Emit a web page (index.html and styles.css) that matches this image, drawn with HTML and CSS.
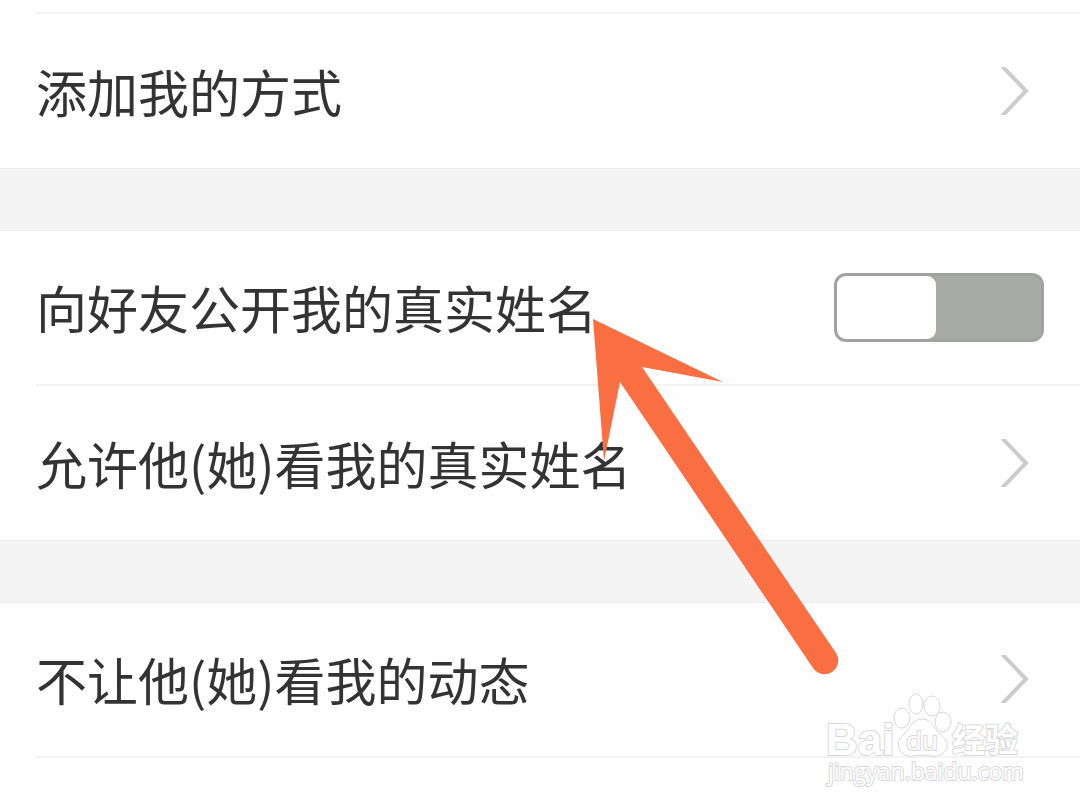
FILE: index.html
```
<!DOCTYPE html>
<html lang="zh-CN">
  <head>
    <title>隐私设置</title>
    <meta charset="UTF-8" />
    <meta name="viewport" content="width=device-width, initial-scale=1" />
    <link rel="stylesheet" href="styles.css">
  </head>
  <body>
    <main class="settings">
      <section class="group group-first">
        <a class="row" href="#add">
          <span class="label">添加我的方式</span>
          <svg class="chevron" viewBox="0 0 28 48"><path d="M1 -1L25 24L1 49" /></svg>
        </a>
      </section>

      <section class="group">
        <div class="row">
          <label class="label" for="real-name">向好友公开我的真实姓名</label>
          <input class="switch" type="checkbox" id="real-name" name="real-name" />
        </div>
        <a class="row" href="#allow">
          <span class="label">允许他(她)看我的真实姓名</span>
          <svg class="chevron" viewBox="0 0 28 48"><path d="M1 -1L25 24L1 49" /></svg>
        </a>
      </section>

      <section class="group group-last">
        <a class="row" href="#hide">
          <span class="label">不让他(她)看我的动态</span>
          <svg class="chevron" viewBox="0 0 28 48"><path d="M1 -1L25 24L1 49" /></svg>
        </a>
      </section>
    </main>

    <!-- pointer to the real name switch -->
    <svg class="arrow" viewBox="0 0 248 358">
      <path d="M1 2L131 65L50 50L244 336A13.5 13.5 0 0 1 221 351L28 65L12 144z" />
    </svg>

    <svg class="watermark" viewBox="0 0 200 100">
      <text class="mark-bai" x="-1" y="65">Bai</text>
      <ellipse cx="75" cy="28" rx="8" ry="10" />
      <ellipse cx="89" cy="14" rx="7" ry="10" />
      <ellipse cx="105" cy="16" rx="8" ry="10" />
      <ellipse cx="116" cy="32" rx="8" ry="10" />
      <path d="M95 29c-9 0-11 8-17 14-5 5-8 9-6 15 2 7 9 9 15 8 6-1 11-1 17 0 7 1 14-2 16-8 1-6-2-10-8-15-6-6-8-14-17-14z" />
      <text class="mark-du" x="79" y="60">du</text>
      <text class="mark-cn" x="125" y="62">经验</text>
      <text class="mark-url" x="1" y="90">jingyan.baidu.com</text>
    </svg>
  </body>
</html>
```
FILE: styles.css
```
* {
  box-sizing: border-box;
}

body {
  margin: 0;
  position: relative;
  min-height: 100vh;
  overflow-x: hidden;
  background-color: #fefefe;
  color: #333;
  font-family: "Noto Sans CJK SC", sans-serif;
  font-size: 51px;
}

.settings {
  padding-top: 12px;
}

.group:not(.group-last) {
  border-bottom: 1px solid #ececec;
}

.group + .group {
  border-top: 61px solid #f4f4f4;
  box-shadow: inset 0 1px #eee;
}

.row {
  display: flex;
  align-items: center;
  justify-content: space-between;
  min-height: 154px;
  margin-left: 36px;
  padding-right: 36px;
  color: inherit;
  text-decoration: none;
}

/* thin lines between the rows */
.row + .row,
.group-first .row {
  border-top: 2px solid #f3f3f3;
  min-height: 156px;
}

.group-last .row {
  border-bottom: 2px solid #f3f3f3;
  min-height: 156px;
}

.label {
  line-height: 72px;
}

.chevron {
  width: 28px;
  height: 48px;
  margin-right: 15px;
  fill: none;
  stroke: #ccc;
  stroke-width: 4px;
}

.switch {
  appearance: none;
  display: flex;
  width: 210px;
  height: 69px;
  margin: 0;
  padding: 0;
  border: 3px solid #a1a3a1;
  border-radius: 12px;
  background-color: #a8aaa7;
  cursor: pointer;
}

.switch::before {
  content: "";
  width: 99px;
  border-radius: 9px;
  background-color: #fff;
}

.switch:checked {
  justify-content: flex-end;
  background-color: #4fb85c;
}

.arrow {
  position: absolute;
  left: 592px;
  top: 317px;
  width: 248px;
  height: 358px;
  fill: #fa6f41;
  pointer-events: none;
}

.watermark {
  position: absolute;
  right: 53px;
  top: 690px;
  width: 200px;
  height: 100px;
  overflow: visible;
  fill: #fff;
  stroke: #d8d8d8;
  stroke-width: 1px;
  pointer-events: none;
}

.watermark text {
  paint-order: stroke;
  stroke-width: 2px;
}

.mark-bai {
  font: bold 44px "Liberation Sans", sans-serif;
}

.mark-du {
  font: 26px "Open Sans", sans-serif;
}

.mark-cn {
  font: bold 33px "Noto Sans CJK SC", sans-serif;
}

.mark-url {
  font: 23px "Open Sans", sans-serif;
}
```
